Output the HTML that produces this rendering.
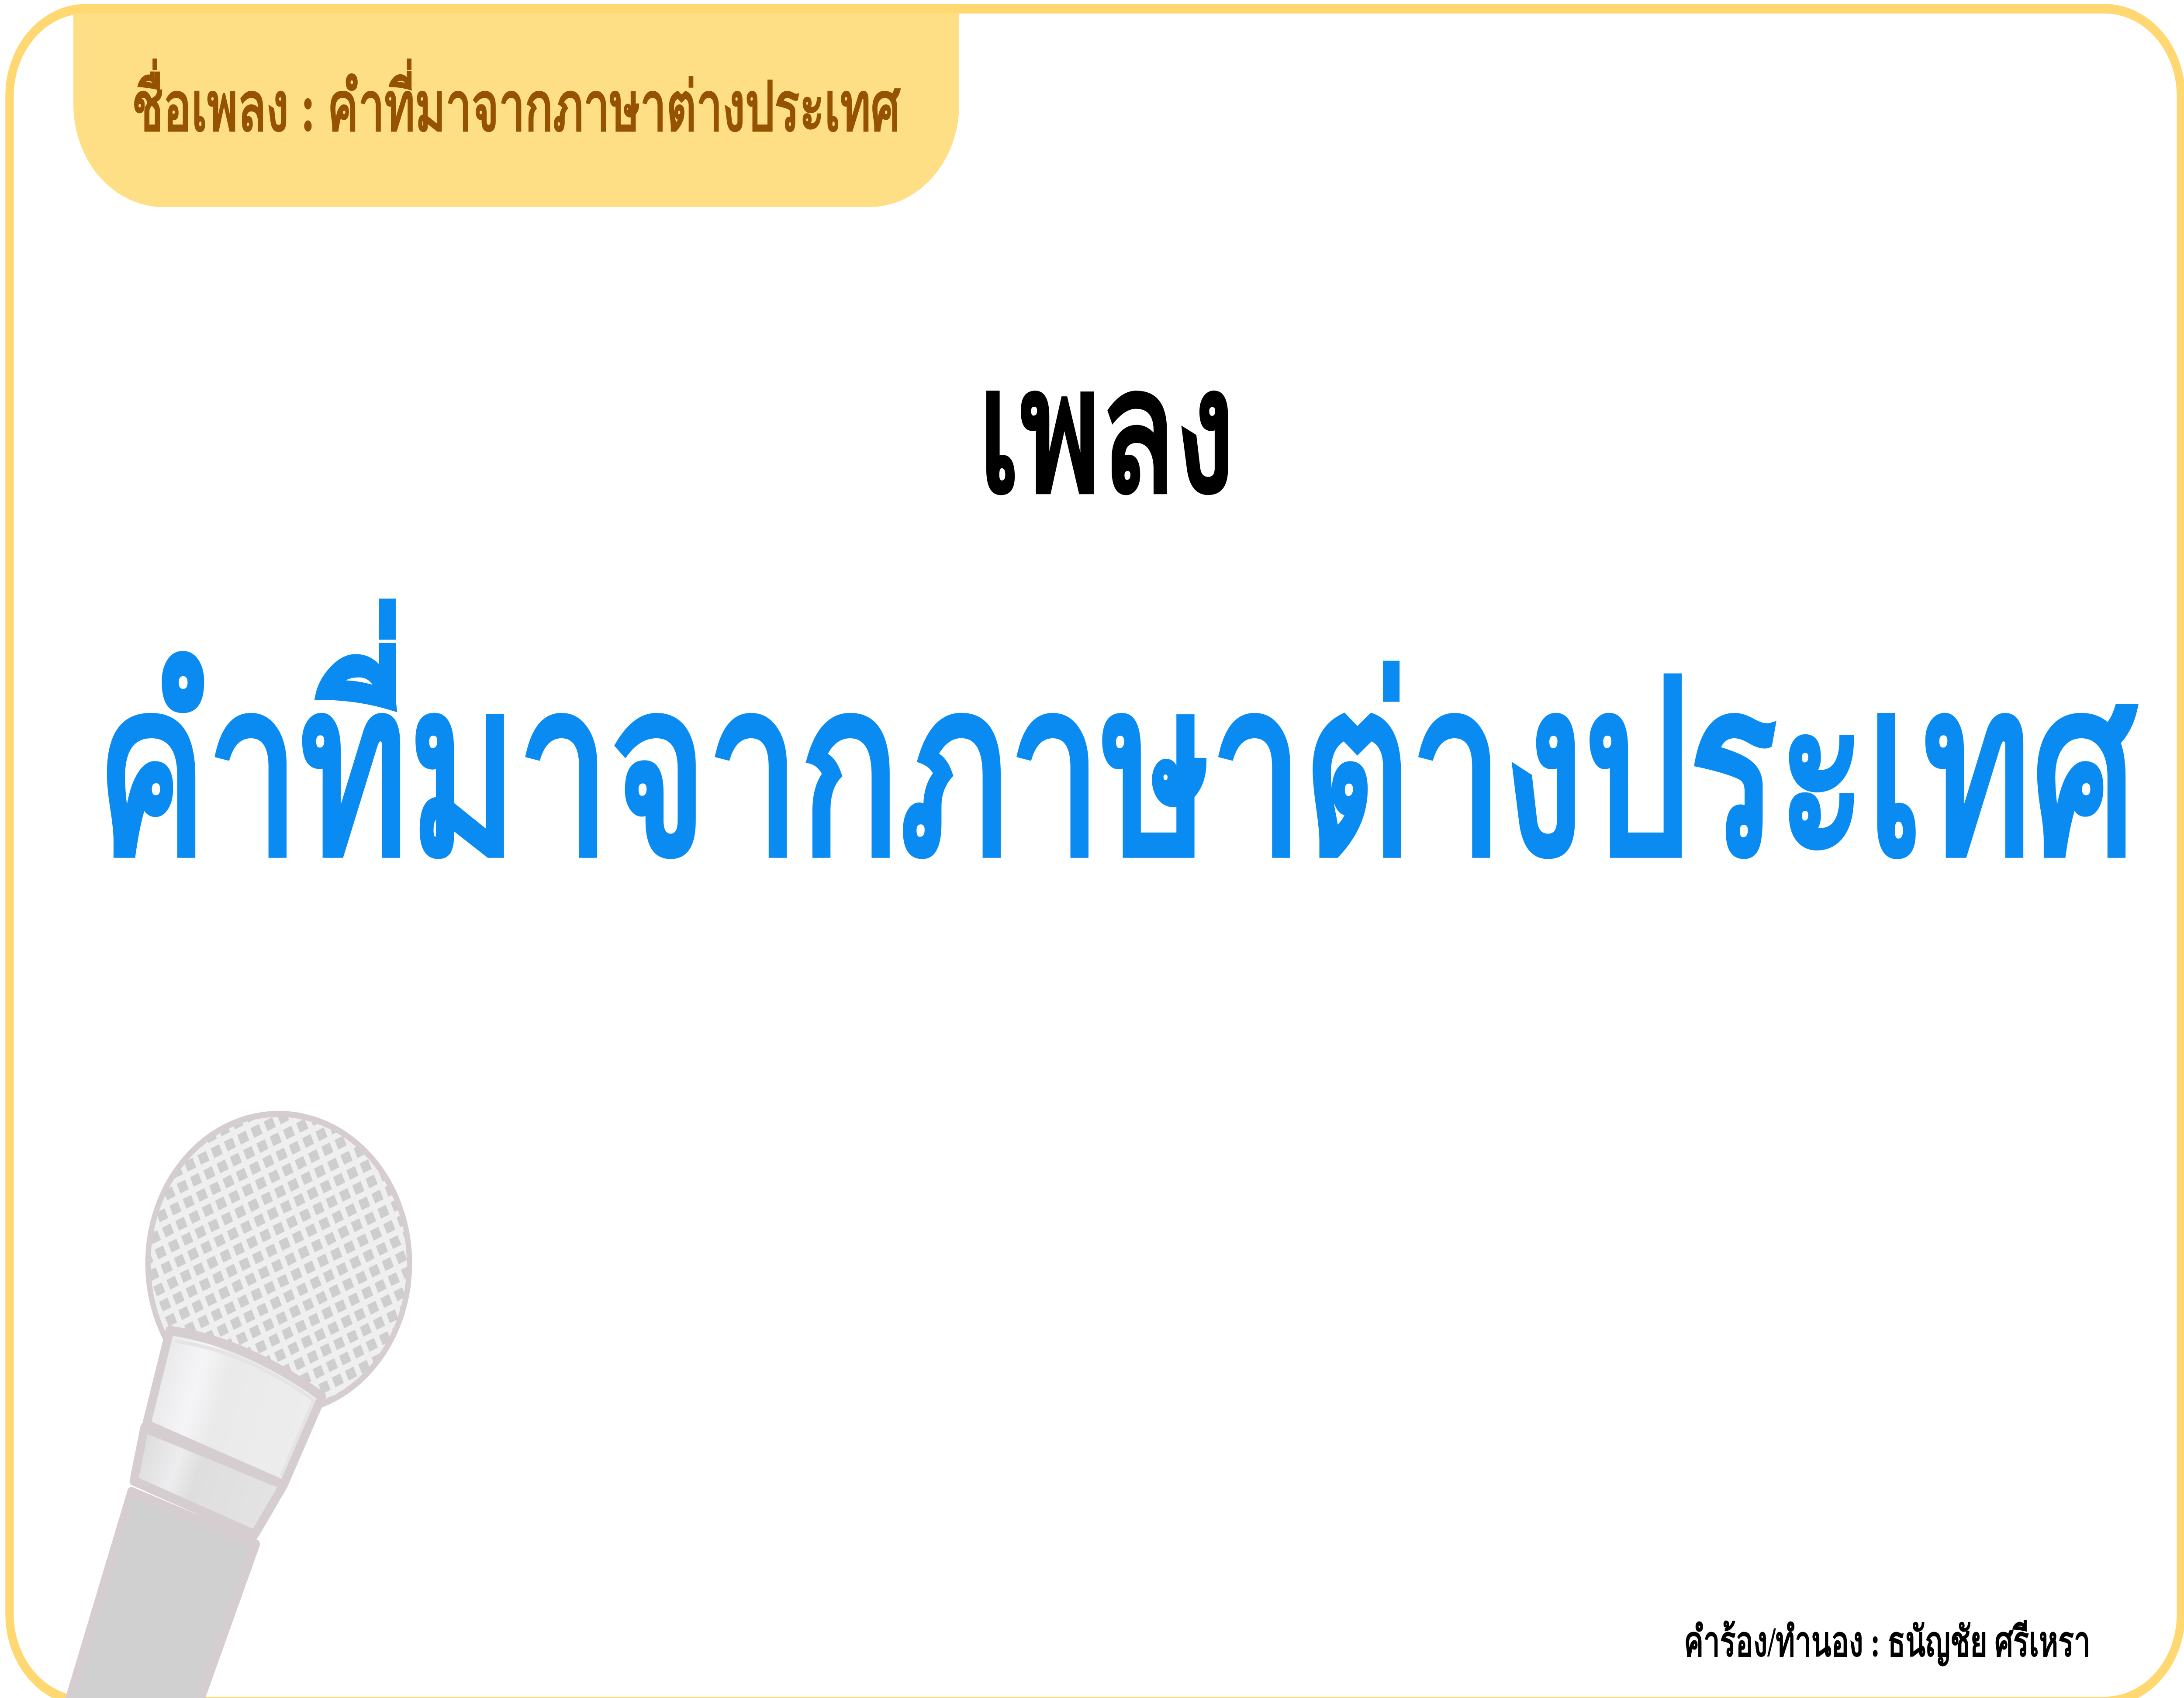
<!DOCTYPE html>
<html><head><meta charset="utf-8"><style>
html,body{margin:0;padding:0;background:#fff;width:100%;height:100%;overflow:hidden;}
svg{display:block;width:100vw;height:100vh;}
text{font-weight:bold;}
</style></head><body>
<svg viewBox="0 0 5713 3887" preserveAspectRatio="none" xmlns="http://www.w3.org/2000/svg">
<defs>
<pattern id="grill" width="38" height="38" patternUnits="userSpaceOnUse" patternTransform="rotate(-24)">
<rect width="38" height="38" fill="#EFEFF0"/>
<rect x="4" y="4" width="24" height="24" fill="#CECECE"/>
</pattern>
<clipPath id="headclip"><circle cx="729" cy="2892" r="335"/></clipPath>
<linearGradient id="collarG" x1="0" y1="0" x2="1" y2="0.25">
<stop offset="0" stop-color="#E2E2E3"/><stop offset="0.35" stop-color="#F5F5F7"/><stop offset="0.5" stop-color="#EAEAEB"/><stop offset="1" stop-color="#EDEDED"/>
</linearGradient>
<linearGradient id="ringG" x1="0" y1="0" x2="1" y2="0.25">
<stop offset="0" stop-color="#D6D6D6"/><stop offset="0.35" stop-color="#EDEDEF"/><stop offset="0.5" stop-color="#DEDEDE"/><stop offset="1" stop-color="#E3E3E3"/>
</linearGradient>
</defs>
<rect width="5713" height="3887" fill="#fff"/>
<rect x="25" y="20" width="5680" height="3875" rx="200" ry="200" fill="none" stroke="#FFD872" stroke-width="22"/>
<path d="M192 31 H2509 V240 A235 235 0 0 1 2274 474 H427 A235 235 0 0 1 192 240 Z" fill="#FFDF85"/>
<text x="345" y="299" font-family="'Liberation Serif','Noto Serif CJK SC',serif" font-size="158" fill="#955200" textLength="2010" lengthAdjust="spacingAndGlyphs">ชื่อเพลง : คำที่มาจากภาษาต่างประเทศ</text>
<text x="2559" y="1125" font-family="'Liberation Sans','Noto Sans CJK SC',sans-serif" font-size="400" fill="#000" textLength="671" lengthAdjust="spacingAndGlyphs">เพลง</text>
<text x="252" y="1955" font-family="'Liberation Sans','Noto Sans CJK SC',sans-serif" font-size="560" fill="#0A8BF2" textLength="5337" lengthAdjust="spacingAndGlyphs">คำที่มาจากภาษาต่างประเทศ</text>
<text x="4405" y="3791" font-family="'Liberation Serif','Noto Serif CJK SC',serif" font-size="96" fill="#000" textLength="1063" lengthAdjust="spacingAndGlyphs">คำร้อง/ทำนอง : ธนัญชัย ศรีเหรา</text>
<circle cx="729" cy="2892" r="337" fill="#EEEEEF" stroke="#D5CDD0" stroke-width="24"/>
<rect x="380" y="2540" width="700" height="720" fill="url(#grill)" clip-path="url(#headclip)"/>
<polygon points="344,3415 669,3535 520,3900 178,3900" fill="#D0D0D0" stroke="#D5CDD0" stroke-width="22" stroke-linejoin="round"/>
<polygon points="378,3268 742,3399 666,3513 350,3390" fill="url(#ringG)" stroke="#D5CDD0" stroke-width="22" stroke-linejoin="round"/>
<path d="M444 3046 Q640 3070 842 3197 L742 3399 L383 3261 Z" fill="url(#collarG)" stroke="#D5CDD0" stroke-width="22" stroke-linejoin="round"/>
<path d="M458 3070 Q640 3092 820 3205 L735 3380" fill="none" stroke="#E4E4E4" stroke-width="8"/>
</svg>
</body></html>
